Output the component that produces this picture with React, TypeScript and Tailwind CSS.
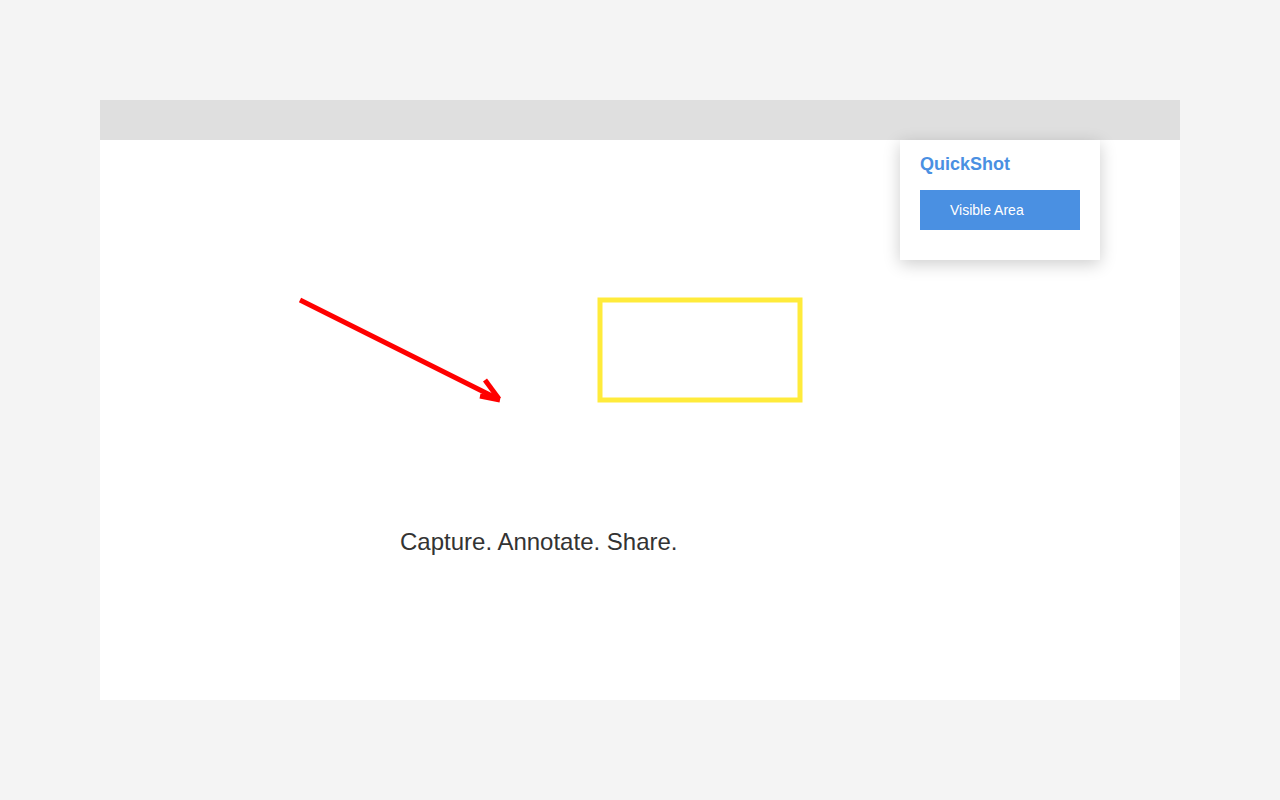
import React from "react";

export default function App() {
  return (
    <div
      className="min-h-[800px] w-full bg-[#f4f4f4] pt-[100px] pl-[100px]"
      style={{ fontFamily: '"Liberation Sans", Arial, sans-serif' }}
    >
      <div className="w-[1080px] h-[600px] flex flex-col">
        <div className="h-10 bg-[#dfdfdf]" />
        <div className="relative flex-1 bg-white">
          <svg className="absolute inset-0" width="1080" height="560">
            <line x1="200" y1="160" x2="398" y2="259" stroke="#ff0000" strokeWidth="5" />
            <line x1="385" y1="240" x2="399" y2="259" stroke="#ff0000" strokeWidth="5" />
            <line x1="380" y1="256" x2="400" y2="260" stroke="#ff0000" strokeWidth="5" />
            <rect x="500" y="160" width="200" height="100" fill="none" stroke="#ffeb3b" strokeWidth="5" />
          </svg>
          <div className="absolute left-[300px] top-[388px] text-[24px] leading-[28px] text-[#333333]">
            Capture. Annotate. Share.
          </div>
          <div className="absolute left-[800px] top-0 w-[200px] h-[120px] bg-white p-5 shadow-[0_4px_16px_rgba(0,0,0,0.2)]">
            <div className="text-[18px] leading-[20px] font-bold text-[#4a90e2] -mt-[6px]">QuickShot</div>
            <div className="mt-[16px] h-10 bg-[#4a90e2] pl-[30px] flex items-center text-[14px] text-white">
              Visible Area
            </div>
          </div>
        </div>
      </div>
    </div>
  );
}
